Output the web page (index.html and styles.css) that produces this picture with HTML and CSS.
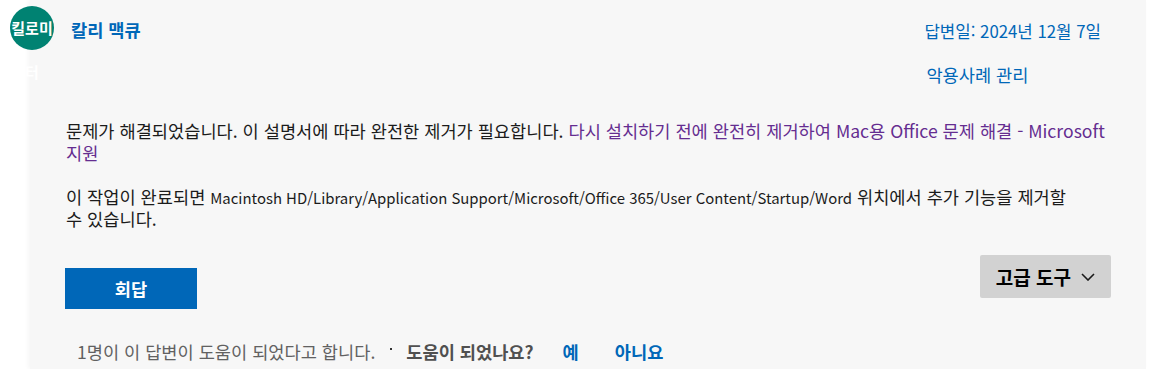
FILE: index.html
```html
<!DOCTYPE html>
<html lang="ko">
<head>
	<meta charset="UTF-8">
	<title>답변</title>
	<link rel="stylesheet" href="styles.css">
</head>
<body>
	<div class="post">
		<div class="avatar">킬로미터</div>
		<div class="post-head">
			<a class="author" href="#">칼리 맥큐</a>
			<div class="meta">
				<div class="date">답변일: 2024년 12월 7일</div>
				<a class="report" href="#">악용사례 관리</a>
			</div>
		</div>
		<div class="post-body">
			<p>문제가 해결되었습니다. 이 설명서에 따라 완전한 제거가 필요합니다. <a class="visited" href="#">다시 설치하기 전에 완전히 제거하여 Mac용 Office 문제 해결 - Microsoft 지원</a></p>
			<p>이 작업이 완료되면 <span class="path">Macintosh HD/Library/Application Support/Microsoft/Office 365/User Content/Startup/Word</span> 위치에서 추가 기능을 제거할 수&nbsp;있습니다.</p>
		</div>
		<div class="post-actions">
			<button class="btn-reply">회답</button>
			<button class="btn-tools">고급 도구
				<svg width="14" height="8" viewBox="0 0 14 8"><path d="M1 1 L7 7 L13 1" fill="none" stroke="#1a1a1a" stroke-width="1.6"/></svg>
			</button>
		</div>
		<div class="vote">
			<span class="vote-count">1명이 이 답변이 도움이 되었다고 합니다.</span>
			<span class="sep"></span>
			<span class="vote-ask">도움이 되었나요?</span>
			<a class="vote-btn yes" href="#">예</a>
			<a class="vote-btn" href="#">아니요</a>
		</div>
	</div>
</body>
</html>
```

FILE: styles.css
```css
*{
	margin: 0;
	padding: 0;
	box-sizing: border-box;
}
body{
	background: #fff;
	font-family: "Noto Sans CJK KR", "Liberation Sans", sans-serif;
	font-size: 17.6px;
	color: #1b1b1b;
}
a{
	text-decoration: none;
}
.post{
	position: relative;
	margin-left: 30px;
	width: 1116px;
	height: 369px;
	background: #f7f7f7;
	box-shadow: -2px 0 4px rgba(0,0,0,0.04);
	padding: 20px 35px 0 35px;
}
.avatar{
	position: absolute;
	left: -20px;
	top: 6px;
	width: 44px;
	height: 44px;
	border-radius: 50%;
	background: #008272;
	color: #fff;
	font-size: 15px;
	font-weight: bold;
	line-height: 44px;
	text-align: center;
}
.post-head{
	display: flex;
	justify-content: space-between;
	padding-left: 6px;
	padding-right: 10px;
}
.author{
	color: #0067b8;
	font-weight: bold;
	line-height: 20px;
}
.meta{
	line-height: 22px;
}
.date{
	color: #0067b8;
	font-size: 16.8px;
}
.report{
	display: block;
	margin-top: 22px;
	margin-left: 2px;
	color: #0067b8;
}
.post-body{
	margin-top: 34px;
	padding-left: 1px;
	line-height: 22px;
	word-break: keep-all;
}
.post-body p + p{
	margin-top: 22px;
}
.path{
	font-size: 14.9px;
	line-height: 1;
}
.visited{
	color: #652d90;
}
.post-actions{
	display: flex;
	justify-content: space-between;
	align-items: flex-start;
	margin-top: 25px;
}
.post-actions button{
	border: none;
	font-family: inherit;
	font-weight: bold;
	cursor: pointer;
}
.btn-reply{
	margin-top: 13px;
	width: 132px;
	height: 41px;
	font-size: 17.6px;
	background: #0067b8;
	color: #fff;
}
.btn-tools{
	display: flex;
	align-items: center;
	gap: 10px;
	height: 43px;
	padding: 0 16px;
	font-size: 19px;
	background: #d2d2d2;
	color: #000;
	border-radius: 2px;
}
.vote{
	display: flex;
	align-items: center;
	margin-top: 32px;
	padding-left: 12px;
	line-height: 22px;
}
.vote-count{
	color: #616161;
}
.sep{
	width: 2px;
	height: 2px;
	background: #333;
	margin: 0 14px 6px 15px;
}
.vote-ask{
	color: #505050;
	font-weight: bold;
}
.vote-btn{
	color: #0067b8;
	font-weight: bold;
	margin-left: 36px;
}
.vote-btn.yes{
	margin-left: 29px;
}
```
